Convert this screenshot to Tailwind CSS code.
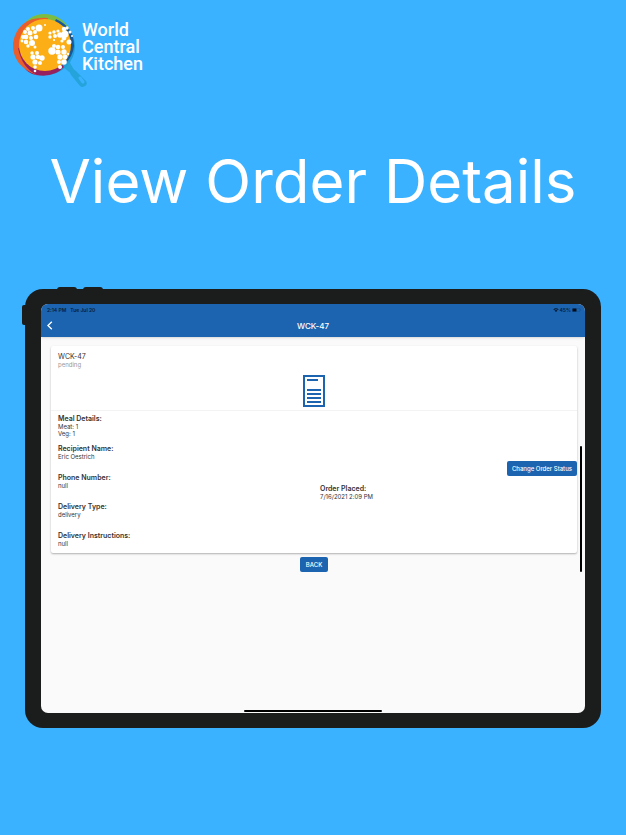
<!DOCTYPE html>
<html lang="en">
<head>
<meta charset="utf-8">
<meta name="viewport" content="width=device-width, initial-scale=1">
<title>View Order Details</title>
<script src="https://cdn.jsdelivr.net/npm/@tailwindcss/browser@4"></script>
</head>
<body class="min-h-screen bg-[#3bb2ff] font-['Inter',sans-serif]">
<header class="flex items-start px-3 pt-3">
  <svg class="h-[76px] w-[76px] shrink-0" viewBox="12 12 76 76" aria-hidden="true">
    <path d="M63 67l6-6 4 7q1 2 3 3l10 10q2 3-1 5t-5 0L71 75q-1-3-3-4z" fill="#25a4dc"/>
    <path d="M80 78l3 4" stroke="#3bb2ff" stroke-width="3" stroke-linecap="round"/>
    <circle cx="46" cy="46" r="29" fill="#219ed5"/>
    <path d="M20 30Q29 14 44 14Q60 14 70 29L44 45Z" fill="#7bbd43"/>
    <path d="M56 19Q74 27 74 46Q73 56 65 64L44 46Z" fill="#17569a"/>
    <path d="M18 48Q20 72 36 75Q54 78 64 67L46 44Z" fill="#97215e"/>
    <path d="M48 18Q18 16 13 43Q12 66 37 75L20 52L45 34Z" fill="#e95e2b"/>
    <path d="M18 48Q22 68 37 75L45 68L24 50Z" fill="#97215e"/>
    <circle cx="45" cy="45" r="26" fill="#fcae17"/>
    <g fill="#fff">
      <circle cx="39" cy="28" r="3.5"/><circle cx="33" cy="28" r="2"/><circle cx="28" cy="29" r="2"/><circle cx="25" cy="32" r="2"/><circle cx="30" cy="33" r="2.5"/><circle cx="35" cy="32" r="2"/><circle cx="23" cy="37" r="2"/><circle cx="26" cy="37" r="2.4"/><circle cx="31" cy="38" r="2"/><circle cx="36" cy="37" r="2.3"/><circle cx="22" cy="41" r="1.4"/><circle cx="26" cy="42" r="2.3"/><circle cx="32" cy="43" r="3"/><circle cx="28" cy="46" r="1.7"/><circle cx="35" cy="47" r="1.5"/><circle cx="45" cy="25" r="1"/>
      <circle cx="32" cy="53" r="1.7"/><circle cx="37" cy="53" r="2"/><circle cx="33" cy="57" r="2.6"/><circle cx="38" cy="57" r="2.2"/><circle cx="42" cy="58" r="2.7"/><circle cx="35" cy="62" r="2.6"/><circle cx="40" cy="63" r="2"/><circle cx="35" cy="67" r="1.8"/><circle cx="35" cy="71" r="1.3"/>
      <circle cx="50" cy="33" r="1.6"/><circle cx="50" cy="37" r="1.7"/><circle cx="54" cy="32" r="1.7"/><circle cx="55" cy="36" r="2"/><circle cx="58" cy="31" r="1.6"/><circle cx="60" cy="35" r="2.8"/><circle cx="64" cy="29" r="2.2"/><circle cx="65" cy="34" r="3.5"/><circle cx="67" cy="28" r="1.7"/><circle cx="70" cy="32" r="1.5"/><circle cx="64" cy="38" r="2.4"/><circle cx="69" cy="42" r="2.5"/><circle cx="62" cy="41" r="1.6"/><circle cx="72" cy="36" r="1"/><circle cx="54" cy="40" r="1.1"/>
      <circle cx="52" cy="51" r="3.7"/><circle cx="54" cy="46" r="2"/><circle cx="58" cy="47" r="2.3"/><circle cx="63" cy="47" r="2"/><circle cx="58" cy="52" r="2.6"/><circle cx="64" cy="52" r="2.7"/><circle cx="60" cy="57" r="2.7"/><circle cx="65" cy="57" r="2.4"/><circle cx="59" cy="62" r="2"/><circle cx="64" cy="62" r="2.8"/><circle cx="60" cy="67" r="2"/><circle cx="68" cy="54" r="1.3"/>
    </g>
  </svg>
  <p class="-ml-2 pt-[9px] pl-[2px] font-['Roboto',sans-serif] text-[18px] leading-[17px] font-medium text-white">World<br>Central<br>Kitchen</p>
</header>
<main>
  <h1 class="mt-[57px] text-center text-[60px] leading-[72px] font-normal text-white">View Order Details</h1>
  <section class="relative mx-[25px] mt-[72px] rounded-[18px] bg-[#1b1c1c] px-4 py-[15px]">
    <span class="absolute -top-[2px] left-8 h-[3px] w-5 rounded-t bg-[#1b1c1c]"></span>
    <span class="absolute -top-[2px] left-[58px] h-[3px] w-5 rounded-t bg-[#1b1c1c]"></span>
    <span class="absolute top-4 -left-[3px] h-5 w-1 rounded-l-[2px] bg-[#1b1c1c]"></span>
    <div class="relative flex min-h-[409px] flex-col overflow-hidden rounded-[7px] bg-[#fafafa] text-[#333]">
      <div class="bg-[#1c64b0] shadow-sm">
        <div class="flex h-3 items-center justify-between pr-1 pl-[6px] text-[5px] leading-3 font-semibold text-[#06203d]">
          <div class="flex gap-1"><span>2:14 PM</span><span>Tue Jul 20</span></div>
          <div class="flex items-center gap-px">
            <svg class="h-1 w-[6px]" viewBox="0 0 12 9" fill="#06162a" aria-hidden="true"><path d="M0 3Q6-2 12 3L10.5 4.7Q6 1 1.5 4.7zM2.5 5.5Q6 3 9.5 5.5L6 9z"/></svg>
            <span>45%</span>
            <svg class="h-1 w-[9px]" viewBox="0 0 18 8" aria-hidden="true"><rect x=".5" y=".5" width="15" height="7" rx="2" fill="none" stroke="#124c8a"/><rect x="1" y="1" width="8" height="6" rx="1" fill="#040c18"/><path d="M17 3v2" stroke="#124c8a"/></svg>
          </div>
        </div>
        <div class="grid h-[21px] grid-cols-3 items-start px-[5px] pt-1">
          <button type="button" aria-label="Back to orders" class="w-2 pt-px"><svg class="h-[9px] w-2" viewBox="0 0 8 9" fill="none" stroke="#fff" stroke-width="1.4" aria-hidden="true"><path d="M5.8.8L2 4.5l3.8 3.7"/></svg></button>
          <h2 class="text-center text-[8px] leading-3 font-medium text-white">WCK-47</h2>
        </div>
      </div>
      <article class="mt-[9px] mr-2 ml-[10px] rounded-[2px] bg-white shadow-[0_1px_2px_rgba(0,0,0,0.3)]">
        <div class="border-b border-[#f3f3f3] px-[7px] pt-[6px] pb-[3px]">
          <h3 class="text-[7px] leading-[9px]">WCK-47</h3>
          <p class="text-[6px] leading-2 text-[#999]">pending</p>
          <svg class="mx-auto mt-[5px] h-[33px] w-[22px]" viewBox="0 0 22 33" fill="none" stroke="#1c64b0" stroke-width="2" aria-hidden="true"><path d="M1 2h20v30H1zM4 6h11M4 16h14M4 20h14M4 24h14M4 28h14"/></svg>
        </div>
        <div class="grid grid-cols-2 items-center">
          <dl class="px-[7px] pt-1 pb-[5px] text-[6px] leading-[7px]">
            <div class="mb-2"><dt class="text-[7px] leading-2 font-semibold">Meal Details:</dt><dd>Meat: 1</dd><dd>Veg: 1</dd></div>
            <div class="mb-[13px]"><dt class="text-[7px] leading-2 font-semibold">Recipient Name:</dt><dd class="leading-2">Eric Oestrich</dd></div>
            <div class="mb-[13px]"><dt class="text-[7px] leading-2 font-semibold">Phone Number:</dt><dd class="leading-2">null</dd></div>
            <div class="mb-[13px]"><dt class="text-[7px] leading-2 font-semibold">Delivery Type:</dt><dd class="leading-2">delivery</dd></div>
            <div><dt class="text-[7px] leading-2 font-semibold">Delivery Instructions:</dt><dd class="leading-2">null</dd></div>
          </dl>
          <div class="flex flex-col pb-[2px]">
            <button type="button" class="h-[15px] self-end rounded-[2px] bg-[#1c64b0] px-[5px] text-[6px] leading-2 font-medium text-white">Change Order Status</button>
            <dl class="mt-[9px] px-[6px] text-[6px] leading-2"><dt class="text-[7px] font-semibold">Order Placed:</dt><dd>7/16/2021 2:09 PM</dd></dl>
          </div>
        </div>
      </article>
      <button type="button" class="mt-1 mr-2 ml-[10px] h-[15px] self-center rounded-[2px] bg-[#1c64b0] px-[6px] text-[6px] leading-2 font-medium text-white">BACK</button>
      <span class="absolute top-[142px] right-[3px] h-[126px] w-[2px] rounded-full bg-black"></span>
      <span class="absolute bottom-px left-1/2 h-[2px] w-[138px] -translate-x-1/2 rounded-full bg-black"></span>
    </div>
  </section>
</main>
</body>
</html>
